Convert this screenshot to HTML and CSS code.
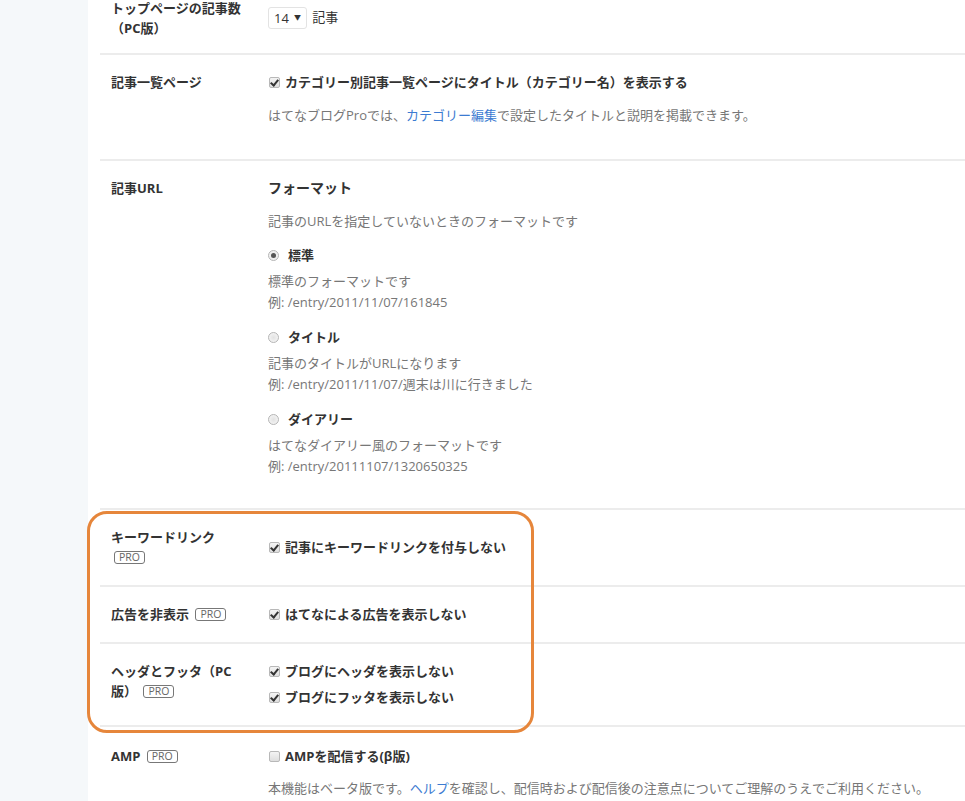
FILE: index.html
```html
<!DOCTYPE html>
<html lang="ja">
<head>
    <meta charset="UTF-8">
    <title>詳細設定</title>
    <link rel="stylesheet" href="styles.css">
</head>
<body>
    <div class="page">
        <div class="sidebar"></div>
        <div class="main">
            <!-- トップページ -->
            <div class="row first center">
                <div class="label">トップページの記事数（PC版）</div>
                <div class="content">
                    <span class="select">14 <span class="arrow">&#9660;</span></span> 記事
                </div>
            </div>

            <!-- 記事一覧 -->
            <div class="row">
                <div class="label">記事一覧ページ</div>
                <div class="content pad-bottom">
                    <div class="check"><span class="cb checked"></span>カテゴリー別記事一覧ページにタイトル（カテゴリー名）を表示する</div>
                    <p class="note">はてなブログProでは、<a href="#">カテゴリー編集</a>で設定したタイトルと説明を掲載できます。</p>
                </div>
            </div>

            <!-- 記事URL -->
            <div class="row">
                <div class="label">記事URL</div>
                <div class="content format">
                    <div class="heading">フォーマット</div>
                    <p class="note">記事のURLを指定していないときのフォーマットです</p>
                    <div class="option">
                        <div class="radio-line"><span class="radio checked"></span>標準</div>
                        <div class="desc">標準のフォーマットです<br>例: /entry/2011/11/07/161845</div>
                    </div>
                    <div class="option">
                        <div class="radio-line"><span class="radio"></span>タイトル</div>
                        <div class="desc">記事のタイトルがURLになります<br>例: /entry/2011/11/07/週末は川に行きました</div>
                    </div>
                    <div class="option">
                        <div class="radio-line"><span class="radio"></span>ダイアリー</div>
                        <div class="desc">はてなダイアリー風のフォーマットです<br>例: /entry/20111107/1320650325</div>
                    </div>
                </div>
            </div>

            <div class="highlight">
                <div class="row center">
                    <div class="label">キーワードリンク <span class="pro">PRO</span></div>
                    <div class="content">
                        <div class="check"><span class="cb checked"></span>記事にキーワードリンクを付与しない</div>
                    </div>
                </div>
                <div class="row">
                    <div class="label">広告を非表示 <span class="pro">PRO</span></div>
                    <div class="content">
                        <div class="check"><span class="cb checked"></span>はてなによる広告を表示しない</div>
                    </div>
                </div>
                <div class="row">
                    <div class="label">ヘッダとフッタ（PC版） <span class="pro">PRO</span></div>
                    <div class="content">
                        <div class="check"><span class="cb checked"></span>ブログにヘッダを表示しない</div>
                        <div class="check second"><span class="cb checked"></span>ブログにフッタを表示しない</div>
                    </div>
                </div>
            </div>

            <!-- AMP -->
            <div class="row amp">
                <div class="label">AMP <span class="pro">PRO</span></div>
                <div class="content">
                    <div class="check"><span class="cb"></span>AMPを配信する(β版)</div>
                    <p class="note amp-note">本機能はベータ版です。<a href="#">ヘルプ</a>を確認し、配信時および配信後の注意点についてご理解のうえでご利用ください。</p>
                </div>
            </div>
        </div>
    </div>
</body>
</html>
```

FILE: styles.css
```css
body {
    margin: 0;
    padding: 0;
    font-family: "Open Sans", "Noto Sans CJK JP", sans-serif;
    font-size: 13px;
    line-height: 20px;
    color: #333;
    background: #fff;
    overflow: hidden;
}
.page {
    display: flex;
    min-height: 100vh;
}
.sidebar {
    flex: 0 0 88px;
    background: #f5f8fa;
}
.main {
    flex: 1;
    padding-left: 12px;
}
.row {
    display: flex;
    align-items: flex-start;
    padding: 17px 0 17px 11px;
    border-bottom: 2px solid #ececec;
}
.row.center {
    align-items: center;
}
.row.first {
    margin-top: -2px;
    padding-top: 0;
    padding-bottom: 15px;
}
.row.amp {
    padding-top: 19px;
    border-bottom: none;
}
.highlight .row {
    padding-bottom: 18px;
}
.label {
    flex: 0 0 131px;
    margin-right: 26px;
    font-weight: bold;
}
.content {
    flex: 1;
}
.pad-bottom {
    padding-bottom: 17px;
}
.select {
    display: inline-flex;
    align-items: center;
    height: 22px;
    padding: 0 5px 0 5px;
    margin-right: 2px;
    border: 1px solid #e3e3e3;
    border-radius: 3px;
    box-sizing: border-box;
    vertical-align: middle;
}
.select .arrow {
    font-size: 7px;
    margin-left: 5px;
    color: #333;
}
.check {
    display: flex;
    align-items: center;
    font-weight: bold;
}
.check.second {
    margin-top: 6px;
}
.cb {
    display: inline-block;
    width: 9px;
    height: 9px;
    margin: 0 5px 0 1px;
    border: 1px solid #b8b8b8;
    border-radius: 2px;
    background: linear-gradient(#f4f4f4, #dedede);
    position: relative;
}
.cb.checked::after {
    content: "";
    position: absolute;
    left: 2px;
    top: 0px;
    width: 3px;
    height: 6px;
    border: solid #333;
    border-width: 0 2px 2px 0;
    transform: rotate(40deg);
}
.note {
    margin: 13px 0 0;
    color: #777;
}
.note a {
    color: #3c7bd1;
    text-decoration: none;
}
.amp-note {
    margin-top: 12px;
}
.heading {
    font-size: 14px;
    font-weight: bold;
}
.format {
    padding-bottom: 14px;
}
.option {
    margin-top: 14px;
}
.radio-line {
    display: flex;
    align-items: center;
    font-weight: bold;
}
.radio {
    display: inline-block;
    width: 9px;
    height: 9px;
    margin-right: 9px;
    border: 1px solid #b5b5b5;
    border-radius: 50%;
    background: radial-gradient(circle, #e2e2e2 0, #f2f2f2 70%);
    position: relative;
}
.radio.checked::after {
    content: "";
    position: absolute;
    left: 2px;
    top: 2px;
    width: 5px;
    height: 5px;
    border-radius: 50%;
    background: #555;
}
.desc {
    margin-top: 6px;
    line-height: 21px;
    color: #777;
}
.pro {
    display: inline-block;
    padding: 0 4px;
    margin-left: 3px;
    border: 1px solid #777;
    border-radius: 3px;
    font-size: 10.5px;
    line-height: 11px;
    font-weight: normal;
    color: #666;
    vertical-align: 1px;
}
.highlight {
    position: relative;
}
.highlight::after {
    content: "";
    position: absolute;
    left: -13px;
    top: 1px;
    width: 447px;
    height: 222px;
    border: 3px solid #e6863b;
    border-radius: 20px;
    box-sizing: border-box;
    pointer-events: none;
}
```
